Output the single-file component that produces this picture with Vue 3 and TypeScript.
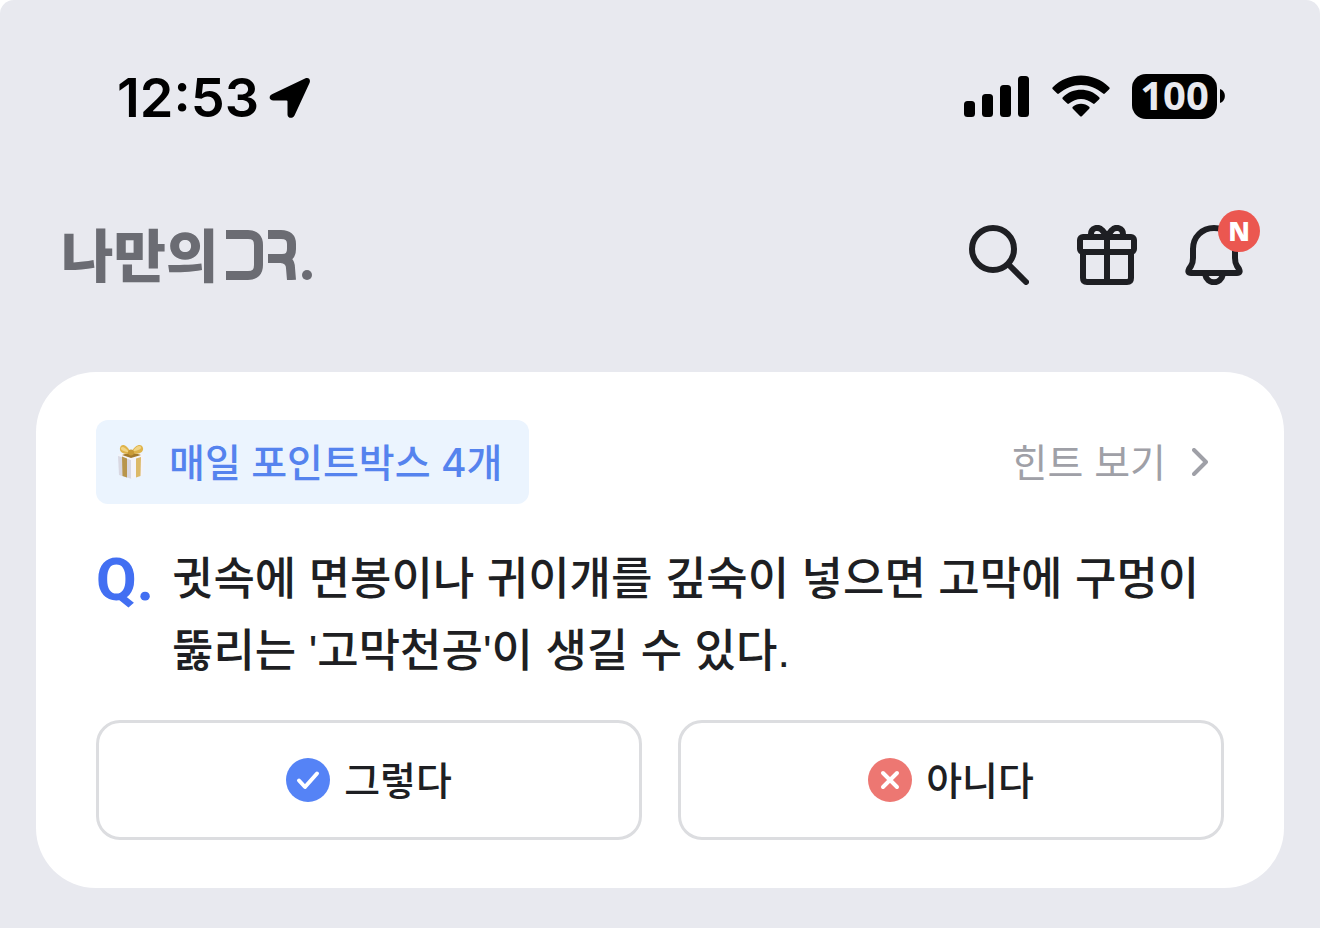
<script setup lang="ts">
import { ref } from 'vue'

type Answer = 'yes' | 'no'

const time = '12:53'
const battery = 100
const boxCount = 4
const answer = ref<Answer | null>(null)
const questionLines: string[] = [
  '귓속에 면봉이나 귀이개를 깊숙이 넣으면 고막에 구멍이',
  "뚫리는 '고막천공'이 생길 수 있다.",
]
</script>

<template>
  <div class="screen">
    <div class="status">
      <div class="status-left">
        <span class="time">{{ time }}</span>
        <svg class="location" viewBox="0 0 42 42" aria-hidden="true">
          <path d="M3.5 17 36 1.600C39.500 0 42 2.500 40.500 6L25.500 38.500C24 42 18.500 41.500 18.500 37.500V24.500Q18.500 23.500 17.500 23.500H4.500C.2 23.500-1 19 3.500 17Z" />
        </svg>
      </div>
      <div class="status-right">
        <svg class="signal" viewBox="0 0 66 42" aria-hidden="true">
          <rect x="0" y="26" width="11" height="16" rx="3.500" />
          <rect x="18" y="19" width="11" height="23" rx="3.500" />
          <rect x="36" y="10" width="11" height="32" rx="3.500" />
          <rect x="54" y="1" width="11" height="41" rx="3.500" />
        </svg>
        <svg class="wifi" viewBox="0 0 58 42" aria-hidden="true">
          <path d="M.8 12.200Q-.2 13.200.8 14.200L5.200 18.600Q6 19.300 6.900 18.600C19.500 7 38.500 7 51.100 18.600Q52 19.300 52.800 18.600L57.200 14.200Q58.200 13.200 57.200 12.200C41.500-3.400 16.500-3.400.8 12.200Z" />
          <path d="M10.800 22.200Q9.800 23.200 10.800 24.200L15.300 28.600Q16.100 29.300 17 28.600C24 22.300 34 22.300 41 28.600Q41.900 29.300 42.700 28.600L47.200 24.200Q48.200 23.200 47.200 22.200C37 12.400 21 12.400 10.800 22.200Z" />
          <path d="M20.800 31.800Q19.800 32.800 20.800 33.800L28.200 41.200Q29 42 29.800 41.200L37.200 33.800Q38.200 32.800 37.200 31.800C32.600 27.800 25.400 27.800 20.800 31.800Z" />
        </svg>
        <div class="battery">
          <span class="battery-body">{{ battery }}</span>
          <svg class="battery-tip" viewBox="0 0 5 14" aria-hidden="true"><path d="M0 0C6.500 2 6.500 12 0 14Z" /></svg>
        </div>
      </div>
    </div>

    <header class="header">
      <a class="logo" href="#" aria-label="나만의 DR.">
        <span class="logo-text">나만의</span>
        <svg class="logo-mark" viewBox="0 0 88 50" aria-hidden="true">
          <path d="M0 4.500H22Q32.500 4.500 32.500 15V35Q32.500 45.500 22 45.500H0" />
          <path d="M42 4.500H55Q65.500 4.500 65.500 14V19Q65.500 28.500 56 28.500H42M55 28.500Q64.500 29.500 64.500 38L65.500 50" />
          <circle cx="81" cy="45" r="5" />
        </svg>
      </a>
      <nav class="actions">
        <button class="icon-button" type="button" aria-label="검색">
          <svg viewBox="0 0 60 60" class="line-icon">
            <circle cx="24" cy="24" r="21" />
            <path d="M40 40 57 57" />
          </svg>
        </button>
        <button class="icon-button" type="button" aria-label="선물">
          <svg viewBox="0 0 60 60" class="line-icon">
            <rect x="3" y="12" width="54" height="15" rx="3" />
            <path d="M6 27V53Q6 57 10 57H50Q54 57 54 53V27M30 12V57" />
            <path d="M14 12V9C14 3 21 1 25 5L30 11L35 5C39 1 46 3 46 9V12" />
          </svg>
        </button>
        <button class="icon-button" type="button" aria-label="알림">
          <svg viewBox="0 0 60 60" class="line-icon">
            <path d="M29 3C17 3 8 12 8 24V33Q8 38 6 41L4 44Q2 48 6 48H52Q56 48 54 44L52 41Q50 38 50 33V24C50 12 41 3 29 3Z" />
            <path d="M20 49C22 60 36 60 38 49" />
          </svg>
          <span class="new-badge">N</span>
        </button>
      </nav>
    </header>

    <main class="card">
      <div class="card-top">
        <div class="point-badge">
          <svg class="gift" viewBox="0 0 28 36" aria-hidden="true">
            <path fill="#d9d8e2" d="M1 12 15 16V35L2 31Z" />
            <path fill="#f3f3fa" d="M14 16 27 12 26 31 14 35Z" />
            <path fill="#f5f4f8" d="M0 11 14 7 28 11 14 16Z" />
            <path fill="#b8954b" d="M5 12.500 10 14.500V33.500L5.500 32Z" />
            <path fill="#dcb968" d="M19 14.500 24 13 23.500 32 19 33.500Z" />
            <path fill="#a37a2c" d="M5 11 14 8 24 11 14 14Z" />
            <path fill="#dfb44c" d="M14 9C10 0 4-1 3 4S8 11 14 9ZM14 9C18 0 25-1 26 4S20 11 14 9Z" />
            <path fill="#f1d486" d="M12 8C8 3 5 2 4 4S8 8 12 8ZM16 7C19 2 23 1 24 3S20 7 16 7Z" />
            <circle cx="14" cy="8.500" r="3" fill="#c99a35" />
          </svg>
          <span class="label">매일 포인트박스 {{ boxCount }}개</span>
        </div>
        <a class="hint" href="#">
          <span class="label">힌트 보기</span>
          <svg class="chevron" viewBox="0 0 16 28" aria-hidden="true"><path d="M2 2 14 14 2 26" /></svg>
        </a>
      </div>

      <div class="question">
        <span class="q-mark">Q.</span>
        <p class="q-text">
          <span v-for="line in questionLines" :key="line" class="q-line">{{ line }}</span>
        </p>
      </div>

      <div class="answers">
        <button class="answer" type="button" :aria-pressed="answer === 'yes'" @click="answer = 'yes'">
          <svg class="mark" viewBox="0 0 44 44" aria-hidden="true">
            <circle cx="22" cy="22" r="22" fill="#5583f6" />
            <path d="M13 22.500 19 29 31 15.500" />
          </svg>
          <span class="label">그렇다</span>
        </button>
        <button class="answer" type="button" :aria-pressed="answer === 'no'" @click="answer = 'no'">
          <svg class="mark" viewBox="0 0 44 44" aria-hidden="true">
            <circle cx="22" cy="22" r="22" fill="#ed7772" />
            <path d="M15 15 29 29M29 15 15 29" />
          </svg>
          <span class="label">아니다</span>
        </button>
      </div>
    </main>
  </div>
</template>

<style>
body {
  margin: 0;
  background: #ffffff;
}
</style>

<style scoped>
.screen {
  box-sizing: border-box;
  min-height: 100vh;
  padding: 68px 36px 40px;
  border-radius: 14px 14px 0 0;
  background: #e8e9ef;
  color: #1e1f23;
  font-family: Inter, "Noto Sans CJK KR", sans-serif;
}

.status {
  display: flex;
  align-items: center;
  justify-content: space-between;
  height: 60px;
  padding: 0 59px 0 81px;
  color: #000000;
}

.status-left,
.status-right,
.battery {
  display: flex;
  align-items: center;
}

.status-left {
  gap: 10px;
}

.time {
  font-size: 54px;
  font-weight: 600;
  line-height: 60px;
}

.location {
  width: 42px;
  height: 42px;
}

.status-right {
  gap: 22px;
  padding-bottom: 4px;
}

.signal {
  width: 66px;
  height: 42px;
}

.wifi {
  width: 58px;
  height: 42px;
}

.battery {
  gap: 3px;
}

.battery-body {
  width: 85px;
  height: 45px;
  border-radius: 14px;
  background: #000000;
  color: #e8e9ef;
  font-family: "Noto Sans", sans-serif;
  font-size: 40px;
  font-weight: 700;
  line-height: 42px;
  text-align: center;
}

.battery-tip {
  width: 5px;
  height: 14px;
}

.header {
  display: flex;
  align-items: center;
  justify-content: space-between;
  height: 90px;
  margin-top: 82px;
  padding: 0 39px 0 25px;
}

.logo {
  display: flex;
  align-items: center;
  gap: 8px;
  color: #6b6c73;
  text-decoration: none;
}

.logo-text {
  padding-top: 4px;
  font-size: 57px;
  font-weight: 900;
  line-height: 60px;
}

.logo-mark {
  width: 88px;
  height: 50px;
}

.logo-mark path {
  fill: none;
  stroke: #6b6c73;
  stroke-width: 9;
}

.logo-mark circle {
  fill: #6b6c73;
}

.actions {
  display: flex;
  gap: 48px;
}

.icon-button {
  position: relative;
  width: 60px;
  height: 60px;
  padding: 0;
  border: 0;
  background: none;
}

.line-icon {
  display: block;
  width: 60px;
  height: 60px;
  fill: none;
  stroke: #1e1f23;
  stroke-width: 6;
  stroke-linecap: round;
  stroke-linejoin: round;
}

.new-badge {
  position: absolute;
  top: -15px;
  right: -15px;
  width: 42px;
  height: 42px;
  border-radius: 50%;
  background: #eb5750;
  color: #ffffff;
  font-family: "Open Sans", sans-serif;
  font-size: 26px;
  font-weight: 800;
  line-height: 42px;
  text-align: center;
}

.card {
  margin-top: 72px;
  padding: 48px 60px;
  border-radius: 60px;
  background: #ffffff;
}

.card-top {
  display: flex;
  align-items: center;
  justify-content: space-between;
}

.point-badge {
  display: flex;
  align-items: center;
  gap: 24px;
  height: 84px;
  padding: 0 27px 0 21px;
  border-radius: 12px;
  background: #ebf4fe;
  color: #5583ee;
  font-size: 39px;
  font-weight: 500;
}

.label {
  padding-bottom: 5px;
}

.gift {
  width: 28px;
  height: 36px;
}

.hint {
  display: flex;
  align-items: center;
  gap: 26px;
  padding-right: 16px;
  color: #9fa0a7;
  font-size: 39px;
  text-decoration: none;
}

.chevron {
  width: 16px;
  height: 28px;
  fill: none;
  stroke: #9fa0a7;
  stroke-width: 4;
  stroke-linecap: round;
  stroke-linejoin: round;
}

.question {
  display: flex;
  margin-top: 40px;
}

.q-mark {
  flex: 0 0 76px;
  color: #426ff2;
  font-family: Roboto, sans-serif;
  font-size: 59px;
  font-weight: 700;
  line-height: 72px;
}

.q-text {
  margin: 0;
  font-family: "Liberation Sans", "Noto Sans CJK KR", sans-serif;
  font-size: 45px;
  font-weight: 500;
  line-height: 72px;
}

.q-line {
  display: block;
}

.answers {
  display: grid;
  grid-template-columns: 1fr 1fr;
  gap: 36px;
  margin-top: 32px;
}

.answer {
  display: flex;
  align-items: center;
  justify-content: center;
  gap: 14px;
  height: 120px;
  border: 3px solid #dcdde0;
  border-radius: 24px;
  background: #ffffff;
  color: #1e1f23;
  font-family: inherit;
  font-size: 39px;
  font-weight: 500;
}

.mark {
  width: 44px;
  height: 44px;
}

.mark path {
  fill: none;
  stroke: #ffffff;
  stroke-width: 4;
  stroke-linecap: round;
  stroke-linejoin: round;
}
</style>
